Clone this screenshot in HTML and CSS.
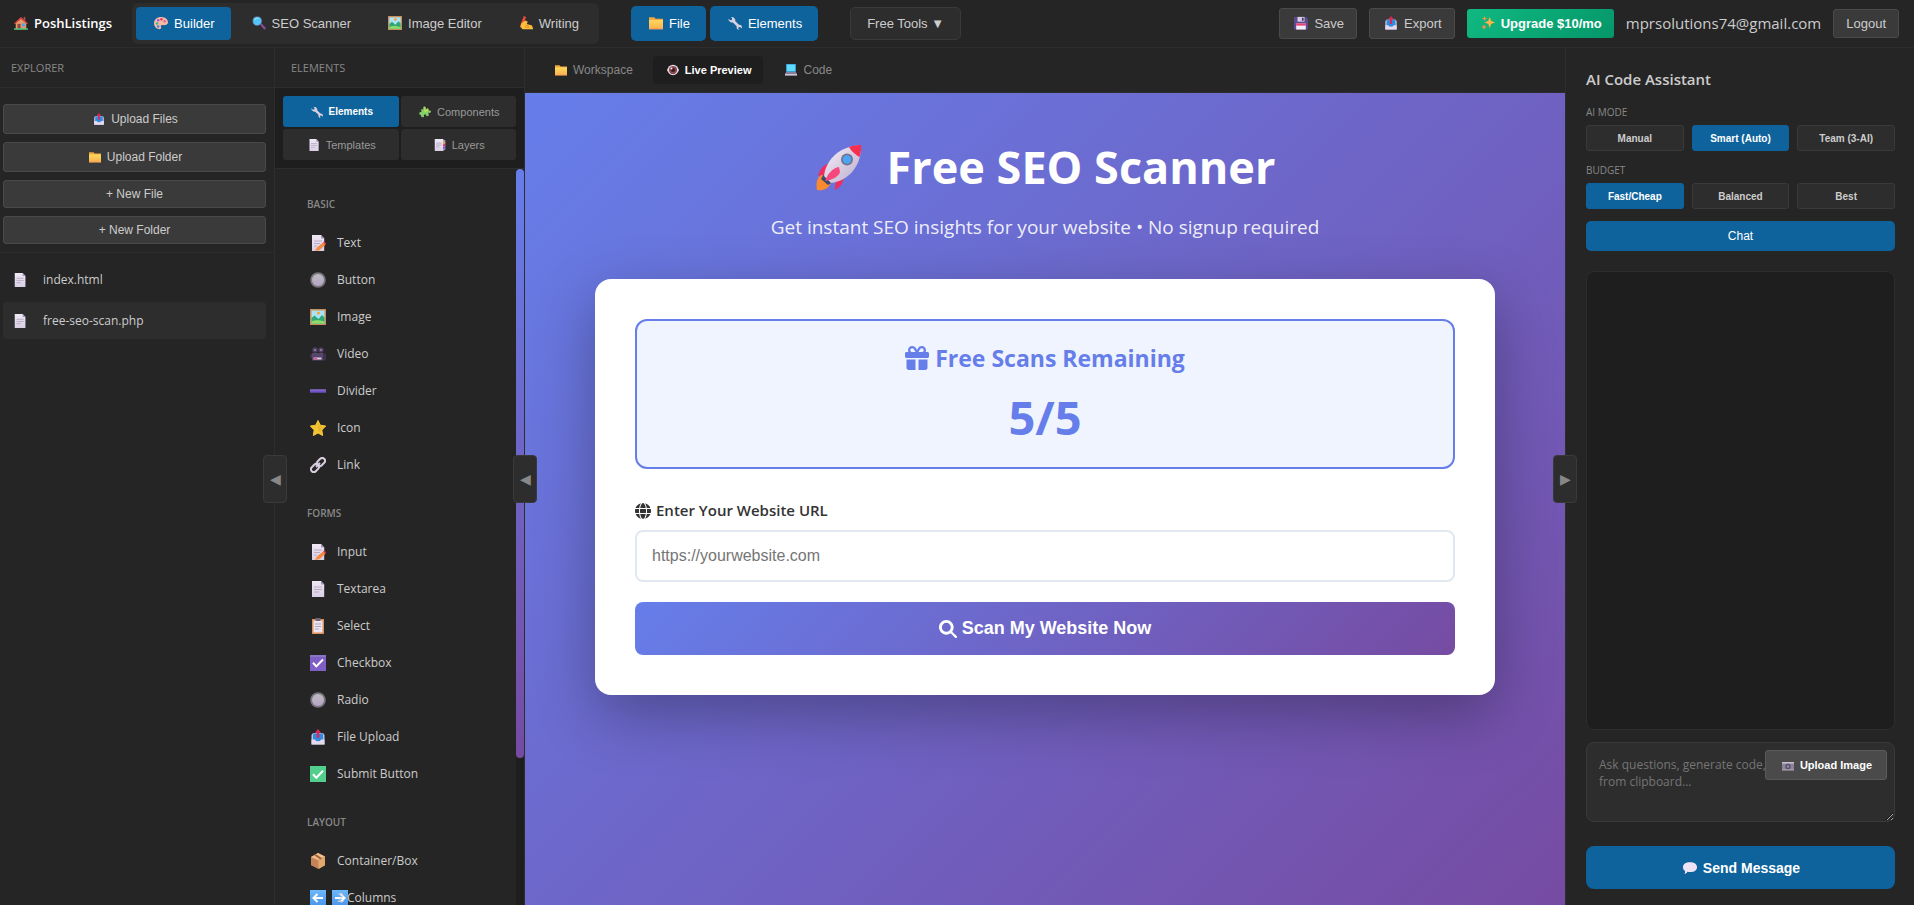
FILE: index.html
```html
<!DOCTYPE html>
<html lang="en">
<head>
<meta charset="utf-8">
<meta name="viewport" content="width=device-width, initial-scale=1">
<title>PoshListings Builder</title>
<link rel="stylesheet" href="styles.css">
</head>
<body>
<svg class="sprite" aria-hidden="true">
  <defs>
    <linearGradient id="g-folder" x1="0" y1="0" x2="0" y2="1"><stop offset="0" stop-color="#ffd75e"/><stop offset="1" stop-color="#f9b04b"/></linearGradient>
    <linearGradient id="g-page" x1="0" y1="0" x2="0" y2="1"><stop offset="0" stop-color="#efe8f5"/><stop offset="1" stop-color="#d9cfe4"/></linearGradient>
    <linearGradient id="g-ring" x1="0" y1="0" x2="0" y2="1"><stop offset="0" stop-color="#bdbcc0"/><stop offset="1" stop-color="#b6a4c8"/></linearGradient>
    <linearGradient id="g-blue" x1="0" y1="0" x2="0" y2="1"><stop offset="0" stop-color="#6bb8fb"/><stop offset="1" stop-color="#4a95ea"/></linearGradient>
    <linearGradient id="g-rocket" x1="0" y1="0" x2="1" y2="1"><stop offset="0" stop-color="#f7f2fb"/><stop offset="1" stop-color="#b9abc9"/></linearGradient>
  </defs>
  <symbol id="i-house" viewBox="0 0 16 16"><path d="M11 1h2v4h-2z" fill="#a8485c"/><path d="M2 7l6-5 6 5v8H2z" fill="#e89a6b"/><path d="M0 8.500L8 1l8 7.500-1.200 1L8 3.600 1.200 9.500z" fill="#d9483f"/><path d="M4 9h3.500v6H4z" fill="#8c4a3f"/><path d="M9 8.500h3.500V12H9z" fill="#4aa8f0"/><path d="M0 14h16v1.800H0z" fill="#4fbf7a"/></symbol>
  <symbol id="i-palette" viewBox="0 0 16 16"><path d="M8 1C3.500 1 0 4 0 8.200 0 12 3 15 6.500 15c1.800 0 2-1.300 1.500-2.300C7.400 11 8.500 10 10 10.300c2.500.5 6-.2 6-3.300C16 3.500 12.500 1 8 1z" fill="#f7b9a4"/><circle cx="3.500" cy="8.500" r="1.500" fill="#3db6a0"/><circle cx="4.800" cy="4.800" r="1.400" fill="#9a5be0"/><circle cx="8.500" cy="3.600" r="1.400" fill="#e8365c"/><circle cx="12.200" cy="6" r="1.500" fill="#e46a9a"/><circle cx="4.800" cy="12" r="1.400" fill="#3b87e0"/></symbol>
  <symbol id="i-lens" viewBox="0 0 16 16"><path d="M9 9.500l1.800-1.300 4.700 5.300c.8 1-.9 2.500-1.900 1.500z" fill="#8a4fa0"/><circle cx="6" cy="5.800" r="5.600" fill="#5f5b78"/><circle cx="6" cy="5.800" r="4.700" fill="#52c4f5"/><path d="M3 4.500C4 2.500 6 2 7.500 2.600" stroke="#b8ecff" fill="none"/></symbol>
  <symbol id="i-picture" viewBox="0 0 16 16"><path d="M0 0h16v16H0z" fill="#c98f5a"/><path d="M1.500 1.500h13v13h-13z" fill="#a9e3fb"/><circle cx="8.500" cy="4" r="1.600" fill="#f7a733"/><path d="M1.500 9l3-2.500 4 3.500 3.500-4 2.500 2.500v6h-13z" fill="#2fa874"/><path d="M1.500 12.500c4-2 8-1 13 0v2h-13z" fill="#8fdc6a"/></symbol>
  <symbol id="i-writing" viewBox="0 0 16 16"><path d="M5.500 0L8 1 5 10l-3.500 3L1 15.500 2 9z" fill="#ee4a35"/><path d="M3 8l4.500-3L10 6.500 8.800 9l5.200 1.500c1.500.5 2 2 1 3H16V15H4l-2.500-3z" fill="#fbbf3b"/><path d="M7.500 10.500l4 1M7 12.700l5 .2" stroke="#dd8a2b" fill="none"/></symbol>
  <symbol id="i-folder" viewBox="0 0 16 16"><path d="M0 1.500h6l1.500 1.700H16V15H0z" fill="#f0a63e"/><path d="M0 4.500h16V15H0z" fill="url(#g-folder)"/><path d="M0 14h16v1H0z" fill="#ff9e66"/></symbol>
  <symbol id="i-wrench" viewBox="0 0 16 16"><path d="M3.200 1.200l3 .2L8.400 4l-.2 1.700 4.300 4.200 2.300.5 1.200 2-.3 1.800-1.900-1.700-1.700.4-.3 1.600 1.500 1.500-2.600-.8-1-2.200.3-1.200L5.500 7.500 3.300 7.300.8 5.200.5 3l2.100 1.900 1.900-.6.2-1.600z" fill="#d8d0e0"/></symbol>
  <symbol id="i-floppy" viewBox="0 0 16 16"><path d="M0 1h14l2 2v12.500H0z" fill="#5c4a8c"/><path d="M4 1h8v5.500H4z" fill="#d5cbe4"/><path d="M9 2h2v3.500H9z" fill="#473a70"/><path d="M2.500 8.500h11v7h-11z" fill="#f4eefa"/><path d="M2.500 8.500h11v2.500h-11z" fill="#ec3f78"/></symbol>
  <symbol id="i-outbox" viewBox="0 0 16 16"><path d="M1.500 6L3 4h10l1.500 2v9.500h-13z" fill="#c9bcd8"/><path d="M3 4.500h10V12H3z" fill="#2d8be0"/><path d="M1.500 10.500H5l1.500 2h3l1.500-2h3.500v5h-13z" fill="#e3daee"/><path d="M8 0l3.200 3.800H9.200V9H6.800V3.800h-2z" fill="#d9275a"/></symbol>
  <symbol id="i-sparkles" viewBox="0 0 16 16"><path d="M10 1l1.500 4.500L16 7.500l-4.500 1.700L10 14l-1.700-4.800L4 7.500l4.300-2z" fill="#fbb34b"/><path d="M3.500 9l.9 2.600L7 12.500l-2.600 1L3.500 16l-1-2.500L0 12.500l2.500-.9zM4 0l.7 2L7 3l-2.200.8L4 6l-.8-2.200L1 3l2.200-1z" fill="#f9933f"/></symbol>
  <symbol id="i-eye" viewBox="0 0 16 16"><path d="M8 1C4 1 1.500 4 0 8c1.500 4 4 7 8 7s6.500-3 8-7c-1.500-4-4-7-8-7z" fill="#e9dfee"/><circle cx="8" cy="8" r="5.500" fill="#8b4a4c"/><circle cx="8" cy="8" r="2.800" fill="#371c24"/><circle cx="6" cy="6" r="1.300" fill="#fff"/></symbol>
  <symbol id="i-laptop" viewBox="0 0 16 16"><path d="M1.500 0h13v10.500h-13z" fill="#3da3e8"/><path d="M2.500 1h11v8.500h-11z" fill="#5cdcf8"/><path d="M1.500 10.500h13L16 13H0z" fill="#8a7ea0"/><path d="M0 13h16v2.500H0z" fill="#cdc2da"/></symbol>
  <symbol id="i-page" viewBox="0 0 16 16"><path d="M2 0h9l3.200 3.500V16H2z" fill="url(#g-page)"/><path d="M11 0l3.200 3.500H11z" fill="#a595b8"/><path d="M4 6h8.200M4 8.500h8.200M4 11h5" stroke="#b9acc6" stroke-width="1.100"/></symbol>
  <symbol id="i-puzzle" viewBox="0 0 16 16"><path d="M3 4l3 .5C5 2 6 .5 7.500.700S9.500 3 8.500 4.500L12 3l1.200 3.200c2-.6 3 .4 2.600 1.800s-2 1.700-3.300.8L13 13l-3.200.8c0-2-1-3-2.300-2.600s-1.500 2-.6 3.300L3.500 15 2.300 11.500C.8 12 0 11 .3 9.600S2 7.800 3.200 8.400z" fill="#84d06a"/><path d="M7 1c2-.5 2 2 1.500 3.500L12 3l1 3-6 3z" fill="#d2dc55" opacity=".7"/></symbol>
  <symbol id="i-tabs" viewBox="0 0 16 16"><path d="M1 0h11.500v16H1z" fill="url(#g-page)"/><path d="M12 1l3 .5V14l-3 1.500z" fill="#b09fc4"/><path d="M12 3.500h3V6h-3z" fill="#f2a03c"/><path d="M12 7h3v2.500h-3z" fill="#e8326a"/><path d="M12 10.500h3V13h-3z" fill="#7c57d8"/><path d="M3 5.500h7M3 8h7M3 10.500h4" stroke="#b2a3c2" stroke-width="1.100"/></symbol>
  <symbol id="i-memo" viewBox="0 0 16 16"><path d="M2 0h9l3.200 3.500V16H2z" fill="url(#g-page)"/><path d="M11 0l3.200 3.500H11z" fill="#a595b8"/><path d="M4 6h8M4 8.500h6M4 11h3" stroke="#b9acc6" stroke-width="1.100"/><path d="M13 7.500l2.400 2.200-6 5.500L5 16l2-3.500z" fill="#f58a42"/><path d="M13 7.500l1.200-1 2 2-.8 1.200z" fill="#e8384f"/></symbol>
  <symbol id="i-knob" viewBox="0 0 16 16"><circle cx="8" cy="8" r="7.800" fill="#77757b"/><circle cx="8" cy="8" r="6" fill="url(#g-ring)"/></symbol>
  <symbol id="i-movie" viewBox="0 0 16 16"><circle cx="5" cy="4" r="2.800" fill="#4c3d5e"/><circle cx="11" cy="4" r="2.800" fill="#4c3d5e"/><circle cx="5" cy="4" r=".9" fill="#a493b5"/><circle cx="11" cy="4" r=".9" fill="#a493b5"/><path d="M2 7h11.500v7.500H2z" fill="#56456b"/><path d="M0 8h2v4H0zM14 8l2-1v8l-2-1z" fill="#3f3150"/><path d="M3.500 11.500h8v2h-8z" fill="#d4c9e0"/><path d="M4 12h3v1.500H4z" fill="#e8508c"/></symbol>
  <symbol id="i-minus" viewBox="0 0 16 16"><path d="M0 6.500h16v3.200H0z" fill="#7250c8"/><path d="M0 6.500h16v1H0z" fill="#8d78cc"/></symbol>
  <symbol id="i-star" viewBox="0 0 16 16"><path d="M8 .5l2.300 4.700 5.400.8-3.900 4 .9 5.500L8 13l-4.700 2.500.9-5.500-3.900-4 5.400-.8z" fill="#f3c533" stroke="#f3c533" stroke-width="1" stroke-linejoin="round"/><path d="M8 2l1.500 4 4 .8-3 2.700.5 3.500-3-2z" fill="#dba62b" opacity=".45"/></symbol>
  <symbol id="i-link" viewBox="0 0 16 16"><g fill="none" stroke="#d7cddf" stroke-width="2"><rect x="6.500" y="2.200" width="9" height="5.600" rx="2.800" transform="rotate(-45 11 5)"/><rect x=".5" y="8.200" width="9" height="5.600" rx="2.800" transform="rotate(-45 5 11)"/><path d="M6 10l4-4"/></g></symbol>
  <symbol id="i-clipboard" viewBox="0 0 16 16"><path d="M2 1h12v15H2z" fill="#dd8f55"/><path d="M3.500 2.500h9v12h-9z" fill="#ece4f2"/><path d="M5.500 0h5v3h-5z" fill="#6e6678"/><path d="M5 6h6M5 8.500h6M5 11h4" stroke="#b2a3c2"/></symbol>
  <symbol id="i-check" viewBox="0 0 16 16"><path d="M0 0h16v16H0z" fill="#7d5fc6"/><path d="M0 0h16v2H0z" fill="#9484bf" opacity=".6"/><path d="M3 7.800l3.300 3.600L13 4.500" stroke="#fff" stroke-width="2" fill="none"/></symbol>
  <symbol id="i-checkgreen" viewBox="0 0 16 16"><path d="M0 0h16v16H0z" fill="#52cf8c"/><path d="M3 8.200l3.300 3.600L13 4.800" stroke="#fff" stroke-width="2" fill="none"/></symbol>
  <symbol id="i-box" viewBox="0 0 16 16"><path d="M1 4l7-4 7 3.500v8.800L8.500 16 1 12.200z" fill="#c48358"/><path d="M1 4l7-4 7 3.500L8.300 7.300z" fill="#eec08e"/><path d="M8.300 7.300L15 3.500v8.800L8.500 16z" fill="#e0a66c"/><path d="M4 2.300l2-1.100 6.200 4.100-2 1.100z" fill="#a5643c"/></symbol>
  <symbol id="i-left" viewBox="0 0 16 16"><path d="M0 0h16v16H0z" fill="url(#g-blue)"/><path d="M13 8H4M7.500 4L3.500 8l4 4" stroke="#fff" stroke-width="2" fill="none"/></symbol>
  <symbol id="i-right" viewBox="0 0 16 16"><path d="M0 0h16v16H0z" fill="url(#g-blue)"/><path d="M3 8h9M8.500 4l4 4-4 4" stroke="#fff" stroke-width="2" fill="none"/></symbol>
  <symbol id="i-camera" viewBox="0 0 16 16"><path d="M0 4h16v11H0z" fill="#8c8498"/><path d="M0 4h16v2H0z" fill="#c8bfd2"/><path d="M0 14h16v1.200H0z" fill="#b4aabf"/><circle cx="8" cy="10" r="3.600" fill="#58506a"/><circle cx="8" cy="10" r="1.800" fill="#9488a8"/></symbol>
  <symbol id="i-speech" viewBox="0 0 16 16"><path d="M8 1.500c5 0 8 2.200 8 5.600s-3 5.600-8 5.600c-1.200 0-2.200-.1-3-.4-.6 1.500-2 2.400-3.500 2.400.8-1 1-2 .8-3.300C.8 10.400 0 9 0 7.100 0 3.700 3 1.500 8 1.500z" fill="#efe4f6"/></symbol>
  <symbol id="i-rocket" viewBox="0 0 48 48"><path d="M6 31C0 35 0 42 1 47c6 1 11-1 14-7z" fill="#f98a2e"/><path d="M8 31l9 8-5 3-7-6z" fill="#3d4a6b"/><path d="M17 20C9 20 4 25 2 33l12-3zM28 31c0 8-3 13-9 16l1-12z" fill="#f02d5e"/><path d="M8 33C10 16 24 3 45 2c1 20-12 36-30 38z" fill="url(#g-rocket)"/><path d="M33 4c4-1.500 8-2 12-2 .3 4 0 8-1.500 12C40 12 35 8 33 4z" fill="#f52f4d"/><circle cx="31" cy="16.500" r="6" fill="#75708c"/><circle cx="31" cy="16.500" r="4.300" fill="#4aa6f5"/><path d="M23 24c-6 1-11 6-14 14 8-1 14-5 15-9z" fill="#f5487d"/></symbol>
  <symbol id="i-gift" viewBox="0 0 512 512"><path fill="currentColor" d="M190.500 68.800L225.300 128H152c-22.100 0-40-17.900-40-40s17.900-40 40-40h2.200c14.900 0 28.800 7.900 36.300 20.800zM64 88c0 14.400 3.500 28 9.600 40H32c-17.700 0-32 14.300-32 32v64c0 17.700 14.300 32 32 32h448c17.700 0 32-14.300 32-32v-64c0-17.700-14.300-32-32-32h-41.600c6.100-12 9.600-25.600 9.600-40 0-48.600-39.400-88-88-88h-2.200c-31.900 0-61.500 16.900-77.700 44.400L256 85.500l-24.100-41C215.700 16.900 186.100 0 154.200 0H152C103.400 0 64 39.400 64 88zm336 0c0 22.100-17.900 40-40 40h-73.300l34.800-59.200C329.100 55.900 342.900 48 357.800 48h2.200c22.100 0 40 17.900 40 40zM32 288v176c0 26.500 21.500 48 48 48h144V288H32zm256 224h144c26.500 0 48-21.500 48-48V288H288v224z"/></symbol>
  <symbol id="i-globe" viewBox="0 0 512 512"><path fill="currentColor" d="M352 256c0 22.200-1.200 43.600-3.300 64H163.300c-2.200-20.400-3.300-41.800-3.300-64s1.200-43.600 3.300-64h185.400c2.200 20.400 3.300 41.800 3.300 64zm28.800-64h123.100c5.300 20.500 8.100 41.900 8.100 64s-2.800 43.500-8.100 64H380.800c2.100-20.600 3.200-42 3.200-64s-1.100-43.400-3.200-64zm112.600-32H376.700c-10-63.900-29.800-117.400-55.300-151.600C399.900 29.100 463.600 85.900 493.400 160zm-149.100 0H167.700c6.100-36.400 15.500-68.600 27-94.700 10.500-23.600 22.200-40.700 33.500-51.500C239.400 3.200 248.700 0 256 0s16.600 3.200 27.800 13.800c11.300 10.800 23 27.900 33.500 51.500 11.600 26 20.900 58.200 27 94.700zm-209 0H18.600C48.400 85.900 112.100 29.100 190.600 8.400 165.100 42.600 145.300 96.100 135.300 160zM8.100 192h123.100c-2.100 20.600-3.200 42-3.200 64s1.100 43.400 3.200 64H8.100C2.800 299.500 0 278.100 0 256s2.800-43.500 8.100-64zm186.600 254.600c-11.600-26-20.900-58.200-27-94.600h176.600c-6.100 36.400-15.500 68.600-27 94.600-10.500 23.600-22.200 40.700-33.500 51.500-11.200 10.700-20.500 13.900-27.800 13.900s-16.600-3.200-27.800-13.800c-11.300-10.800-23-27.900-33.500-51.500zM135.300 352c10 63.900 29.800 117.400 55.300 151.600C112.100 482.900 48.400 426.100 18.600 352h116.700zm358.100 0c-29.800 74.100-93.500 130.900-171.900 151.600 25.500-34.200 45.200-87.700 55.300-151.600h116.600z"/></symbol>
  <symbol id="i-search" viewBox="0 0 512 512"><path fill="currentColor" d="M416 208c0 45.900-14.900 88.300-40 122.700l126.600 126.700c12.500 12.500 12.500 32.800 0 45.300s-32.800 12.500-45.300 0L330.700 376C296.300 401.200 253.900 416 208 416 93.100 416 0 322.900 0 208S93.100 0 208 0s208 93.100 208 208zM208 336a128 128 0 1 0 0-256 128 128 0 0 0 0 256z"/></symbol>
</svg>

<header class="topbar">
  <div class="brand"><svg class="ico"><use href="#i-house"/></svg>PoshListings</div>
  <nav class="modes">
    <button class="mode active"><svg class="ico"><use href="#i-palette"/></svg>Builder</button>
    <button class="mode"><svg class="ico"><use href="#i-lens"/></svg>SEO Scanner</button>
    <button class="mode"><svg class="ico"><use href="#i-picture"/></svg>Image Editor</button>
    <button class="mode"><svg class="ico"><use href="#i-writing"/></svg>Writing</button>
  </nav>
  <div class="panels">
    <button class="panel-toggle"><svg class="ico"><use href="#i-folder"/></svg>File</button>
    <button class="panel-toggle"><svg class="ico"><use href="#i-wrench"/></svg>Elements</button>
  </div>
  <button class="free-tools">Free Tools ▼</button>
  <div class="account">
    <button class="action"><svg class="ico"><use href="#i-floppy"/></svg>Save</button>
    <button class="action"><svg class="ico"><use href="#i-outbox"/></svg>Export</button>
    <button class="upgrade"><svg class="ico"><use href="#i-sparkles"/></svg>Upgrade $10/mo</button>
    <span class="email">mprsolutions74@gmail.com</span>
    <button class="action logout">Logout</button>
  </div>
</header>

<div class="workspace">
  <aside class="explorer">
    <h2 class="panel-title">Explorer</h2>
    <div class="file-actions">
      <button class="file-btn"><svg class="ico small"><use href="#i-outbox"/></svg>Upload Files</button>
      <button class="file-btn"><svg class="ico small"><use href="#i-folder"/></svg>Upload Folder</button>
      <button class="file-btn">+ New File</button>
      <button class="file-btn">+ New Folder</button>
    </div>
    <ul class="files">
      <li class="file"><svg class="ico"><use href="#i-page"/></svg>index.html</li>
      <li class="file active"><svg class="ico"><use href="#i-page"/></svg>free-seo-scan.php</li>
    </ul>
    <button class="handle" aria-label="Collapse explorer">◀</button>
  </aside>

  <aside class="elements">
    <h2 class="panel-title wide">Elements</h2>
    <div class="element-tabs">
      <button class="element-tab active"><svg class="ico small"><use href="#i-wrench"/></svg>Elements</button>
      <button class="element-tab"><svg class="ico small"><use href="#i-puzzle"/></svg>Components</button>
      <button class="element-tab"><svg class="ico small"><use href="#i-page"/></svg>Templates</button>
      <button class="element-tab"><svg class="ico small"><use href="#i-tabs"/></svg>Layers</button>
    </div>
    <div class="element-scroll">
      <div class="element-list">
        <section class="group">
          <h3 class="group-title">Basic</h3>
          <div class="element"><span class="slot"><svg class="glyph"><use href="#i-memo"/></svg></span>Text</div>
          <div class="element"><span class="slot"><svg class="glyph"><use href="#i-knob"/></svg></span>Button</div>
          <div class="element"><span class="slot"><svg class="glyph"><use href="#i-picture"/></svg></span>Image</div>
          <div class="element"><span class="slot"><svg class="glyph"><use href="#i-movie"/></svg></span>Video</div>
          <div class="element"><span class="slot"><svg class="glyph"><use href="#i-minus"/></svg></span>Divider</div>
          <div class="element"><span class="slot"><svg class="glyph"><use href="#i-star"/></svg></span>Icon</div>
          <div class="element"><span class="slot"><svg class="glyph"><use href="#i-link"/></svg></span>Link</div>
        </section>
        <section class="group">
          <h3 class="group-title">Forms</h3>
          <div class="element"><span class="slot"><svg class="glyph"><use href="#i-memo"/></svg></span>Input</div>
          <div class="element"><span class="slot"><svg class="glyph"><use href="#i-page"/></svg></span>Textarea</div>
          <div class="element"><span class="slot"><svg class="glyph"><use href="#i-clipboard"/></svg></span>Select</div>
          <div class="element"><span class="slot"><svg class="glyph"><use href="#i-check"/></svg></span>Checkbox</div>
          <div class="element"><span class="slot"><svg class="glyph"><use href="#i-knob"/></svg></span>Radio</div>
          <div class="element"><span class="slot"><svg class="glyph"><use href="#i-outbox"/></svg></span>File Upload</div>
          <div class="element"><span class="slot"><svg class="glyph"><use href="#i-checkgreen"/></svg></span>Submit Button</div>
        </section>
        <section class="group">
          <h3 class="group-title">Layout</h3>
          <div class="element"><span class="slot"><svg class="glyph"><use href="#i-box"/></svg></span>Container/Box</div>
          <div class="element"><span class="slot"><svg class="glyph"><use href="#i-left"/></svg><svg class="glyph"><use href="#i-right"/></svg></span>2 Columns</div>
        </section>
      </div>
      <div class="scrollbar"><div class="thumb"></div></div>
    </div>
    <button class="handle" aria-label="Collapse elements">◀</button>
  </aside>

  <main class="stage">
    <div class="view-tabs">
      <button class="view-tab"><svg class="ico small"><use href="#i-folder"/></svg>Workspace</button>
      <button class="view-tab active"><svg class="ico small"><use href="#i-eye"/></svg>Live Preview</button>
      <button class="view-tab"><svg class="ico small"><use href="#i-laptop"/></svg>Code</button>
    </div>
    <div class="preview">
      <h1 class="hero"><svg class="rocket"><use href="#i-rocket"/></svg>Free SEO Scanner</h1>
      <p class="tagline">Get instant SEO insights for your website • No signup required</p>
      <form class="card">
        <div class="quota">
          <h2 class="quota-title"><svg class="gift"><use href="#i-gift"/></svg>Free Scans Remaining</h2>
          <div class="quota-count">5/5</div>
        </div>
        <label class="url-label" for="url"><svg class="globe"><use href="#i-globe"/></svg>Enter Your Website URL</label>
        <input class="url" id="url" type="url" placeholder="https://yourwebsite.com">
        <button class="scan" type="button"><svg class="search"><use href="#i-search"/></svg>Scan My Website Now</button>
      </form>
    </div>
  </main>

  <aside class="assistant">
    <h2 class="assistant-title">AI Code Assistant</h2>
    <div class="caption">AI MODE</div>
    <div class="choices">
      <button class="choice">Manual</button>
      <button class="choice active">Smart (Auto)</button>
      <button class="choice">Team (3-AI)</button>
    </div>
    <div class="caption">BUDGET</div>
    <div class="choices">
      <button class="choice active">Fast/Cheap</button>
      <button class="choice">Balanced</button>
      <button class="choice">Best</button>
    </div>
    <button class="chat">Chat</button>
    <div class="messages"></div>
    <div class="composer">
      <textarea class="prompt" aria-label="Message" placeholder="Ask questions, generate code, or paste images from clipboard..."></textarea>
      <button class="upload-image"><svg class="ico small"><use href="#i-camera"/></svg>Upload Image</button>
    </div>
    <button class="send"><svg class="ico"><use href="#i-speech"/></svg>Send Message</button>
    <button class="handle left" aria-label="Collapse assistant">▶</button>
  </aside>
</div>
</body>
</html>
```
FILE: styles.css
```css
* { box-sizing: border-box; }

body {
  margin: 0;
  height: 100vh;
  display: flex;
  flex-direction: column;
  overflow: hidden;
  background: #1e1e1e;
  color: #ccc;
  font-family: "Open Sans", "Noto Sans", sans-serif;
}

h1, h2, h3, p, ul { margin: 0; padding: 0; }

button {
  display: inline-flex;
  align-items: center;
  justify-content: center;
  gap: 4px;
  margin: 0;
  border: 0;
  font-family: "Liberation Sans", Arial, sans-serif;
  color: #ccc;
  white-space: nowrap;
}

.sprite { position: absolute; width: 0; height: 0; }

.ico { flex: none; width: 14px; height: 14px; margin: 0 2px; }
.ico.small { width: 12px; height: 12px; }

/* Top bar */
.topbar {
  display: flex;
  align-items: center;
  flex: none;
  height: 48px;
  padding: 0 15px 1px 12px;
  background: #252525;
  border-bottom: 1px solid #2d2d2d;
}

.brand {
  display: flex;
  align-items: center;
  gap: 4px;
  margin-right: 20px;
  color: #fff;
  font-size: 13px;
  font-weight: 600;
}

.modes {
  display: flex;
  gap: 3px;
  padding: 4px;
  background: #2d2d2d;
  border-radius: 6px;
}

.mode {
  height: 33px;
  padding: 0 16px;
  background: none;
  border-radius: 4px;
  font-size: 13px;
}

.mode.active, .panel-toggle { background: #0e639c; color: #fff; }

.panels { display: flex; gap: 4px; margin: 0 32px; }

.panel-toggle {
  height: 35px;
  padding: 0 16px;
  border-radius: 5px;
  font-size: 13px;
}

.free-tools {
  height: 33px;
  padding: 0 16px;
  background: #2d2d2d;
  border: 1px solid #3a3a3a;
  border-radius: 5px;
  font-size: 13px;
}

.account { display: flex; align-items: center; gap: 12px; margin-left: auto; }

.action {
  height: 31px;
  padding: 0 12px;
  background: #3a3a3a;
  border: 1px solid #4a4a4a;
  border-radius: 3px;
  font-size: 13px;
}

.logout { height: 29px; }

.upgrade {
  height: 29px;
  padding: 0 12px;
  background: linear-gradient(135deg, #10b981, #059669);
  border-radius: 3px;
  color: #fff;
  font-size: 13px;
  font-weight: 700;
}

.email { font-size: 15px; }

/* Columns */
.workspace {
  display: grid;
  grid-template-columns: 275px 250px minmax(0, 1fr) 349px;
  flex: 1;
  min-height: 0;
}

.explorer, .elements, .assistant {
  position: relative;
  display: flex;
  flex-direction: column;
  min-height: 0;
  background: #252525;
}

.explorer, .elements { border-right: 1px solid #2d2d2d; }

.panel-title {
  flex: none;
  height: 40px;
  padding: 0 11px;
  border-bottom: 1px solid #2d2d2d;
  color: #888;
  font-size: 11px;
  font-weight: 400;
  line-height: 40px;
  text-transform: uppercase;
}

.panel-title.wide { padding: 0 16px; }

.handle {
  position: absolute;
  z-index: 2;
  top: 50%;
  right: -13px;
  width: 24px;
  height: 48px;
  margin-top: -22px;
  padding: 0;
  background: #2d2d2d;
  border: 1px solid #3a3a3a;
  border-radius: 4px;
  color: #888;
  font-size: 14px;
}

.handle.left { right: auto; left: -13px; }

/* Explorer */
.file-actions {
  display: flex;
  flex-direction: column;
  gap: 8px;
  padding: 16px 8px 8px 3px;
  border-bottom: 1px solid #2d2d2d;
}

.file-btn {
  height: 28px;
  background: #3a3a3a;
  border: 1px solid #4a4a4a;
  border-radius: 3px;
  font-size: 12px;
}

.file-btn:has(svg) { height: 30px; }

.files {
  display: flex;
  flex-direction: column;
  gap: 4px;
  padding: 8px 8px 8px 3px;
  list-style: none;
}

.file {
  display: flex;
  align-items: center;
  gap: 14px;
  height: 37px;
  padding: 0 8px;
  border-radius: 4px;
  font-size: 12px;
}

.file.active { background: #2d2d2d; }

/* Elements */
.element-tabs {
  display: grid;
  grid-template-columns: 1fr 1fr;
  gap: 2px;
  padding: 8px;
  background: #1e1e1e;
  border-bottom: 1px solid #2d2d2d;
}

.element-tab {
  height: 31px;
  background: #2d2d2d;
  border-radius: 3px;
  color: #999;
  font-size: 11px;
}

.element-tab.active {
  background: #0e639c;
  color: #fff;
  font-size: 10px;
  font-weight: 700;
}

.element-scroll { display: flex; flex: 1; min-height: 0; }

.element-list { flex: 1; padding: 27px 12px 0 32px; overflow: hidden; }

.group { padding-bottom: 22px; }

.group-title {
  margin-bottom: 12px;
  color: #888;
  font-size: 10px;
  font-weight: 600;
  line-height: 16px;
  text-transform: uppercase;
}

.element {
  display: flex;
  align-items: center;
  gap: 10px;
  height: 37px;
  padding-left: 2px;
  font-size: 12px;
}

.slot { display: flex; gap: 6px; width: 18px; padding-left: 1px; }

.glyph { flex: none; width: 16px; height: 16px; }

.scrollbar { flex: none; width: 8px; background: #1e1e1e; }

.thumb {
  height: 80%;
  background: linear-gradient(180deg, #667eea, #764ba2);
  border-radius: 4px;
}

/* Preview */
.stage { display: flex; flex-direction: column; min-width: 0; }

.view-tabs {
  display: flex;
  gap: 8px;
  flex: none;
  padding: 8px 16px;
  background: #252525;
  border-bottom: 1px solid #2d2d2d;
}

.view-tab {
  height: 28px;
  padding: 0 12px;
  background: none;
  border-radius: 4px;
  color: #888;
  font-size: 12px;
}

.view-tab.active {
  background: #1e1e1e;
  color: #fff;
  font-size: 11px;
  font-weight: 700;
}

.preview {
  display: flex;
  flex-direction: column;
  align-items: center;
  flex: 1;
  padding: 40px 20px;
  overflow: hidden;
  background: linear-gradient(135deg, #667eea, #764ba2);
}

.hero {
  display: flex;
  align-items: center;
  gap: 22px;
  color: #fff;
  font-size: 45px;
  line-height: 68px;
}

.rocket { width: 50px; height: 48px; }

.tagline {
  margin: 12px 0 38px;
  color: rgba(255, 255, 255, 0.9);
  font-size: 19px;
  line-height: 28px;
}

.card {
  display: flex;
  flex-direction: column;
  width: 100%;
  max-width: 900px;
  padding: 40px;
  background: #fff;
  border-radius: 16px;
  box-shadow: 0 20px 60px rgba(0, 0, 0, 0.3);
}

.quota {
  padding: 20px 20px 18px;
  background: #f0f4ff;
  border: 2px solid #667eea;
  border-radius: 12px;
  color: #667eea;
  text-align: center;
}

.quota-title {
  display: flex;
  align-items: center;
  justify-content: center;
  gap: 6px;
  font-size: 23px;
  line-height: 34px;
}

.gift { width: 24px; height: 24px; }

.quota-count {
  margin-top: 10px;
  font-size: 47px;
  font-weight: 700;
  line-height: 64px;
}

.url-label {
  display: flex;
  align-items: center;
  gap: 5px;
  margin: 30px 0 8px;
  color: #333;
  font-size: 15px;
  font-weight: 600;
  line-height: 23px;
}

.globe { width: 16px; height: 16px; }

.url {
  height: 52px;
  padding: 0 15px;
  background: #fff;
  border: 2px solid #e2e8f0;
  border-radius: 8px;
  font-family: "Liberation Sans", Arial, sans-serif;
  font-size: 16px;
}

.url::placeholder { color: #757575; }

.scan {
  gap: 5px;
  height: 53px;
  margin-top: 20px;
  background: linear-gradient(135deg, #667eea, #764ba2);
  border-radius: 8px;
  color: #fff;
  font-size: 18px;
  font-weight: 700;
}

.search { width: 18px; height: 18px; }

/* Assistant */
.assistant {
  padding: 19px 19px 16px 20px;
  border-left: 1px solid #2d2d2d;
}

.assistant-title { font-size: 15px; font-weight: 600; line-height: 24px; }

.caption {
  margin: 11px 0 5px;
  color: #888;
  font-size: 10px;
  line-height: 16px;
}

.assistant-title + .caption { margin-top: 13px; }

.choices {
  display: grid;
  grid-template-columns: repeat(3, 1fr);
  gap: 8px;
}

.choice {
  height: 26px;
  padding: 0;
  background: #2d2d2d;
  border: 1px solid #3a3a3a;
  border-radius: 3px;
  font-size: 10px;
  font-weight: 700;
}

.choice.active, .chat, .send { background: #0e639c; border-color: #0e639c; color: #fff; }

.chat {
  flex: none;
  height: 30px;
  margin: 12px 0 20px;
  border-radius: 5px;
  font-size: 12px;
}

.messages {
  flex: 1;
  background: #1e1e1e;
  border: 1px solid #2d2d2d;
  border-radius: 8px;
}

.composer { position: relative; display: flex; margin: 12px 0 24px; }

.prompt {
  flex: 1;
  height: 80px;
  padding: 13px 12px;
  background: #2d2d2d;
  border: 1px solid #3a3a3a;
  border-radius: 8px;
  color: #ccc;
  font-family: "Open Sans", "Noto Sans", sans-serif;
  font-size: 12px;
  line-height: 17px;
  resize: vertical;
}

.prompt::placeholder { color: #757575; }

.upload-image {
  position: absolute;
  top: 8px;
  right: 8px;
  height: 30px;
  padding: 0 14px;
  background: #4a4a4a;
  border: 1px solid #5a5a5a;
  border-radius: 3px;
  color: #fff;
  font-size: 11px;
  font-weight: 700;
}

.send {
  flex: none;
  height: 43px;
  border-radius: 8px;
  font-size: 14px;
  font-weight: 700;
}
```
